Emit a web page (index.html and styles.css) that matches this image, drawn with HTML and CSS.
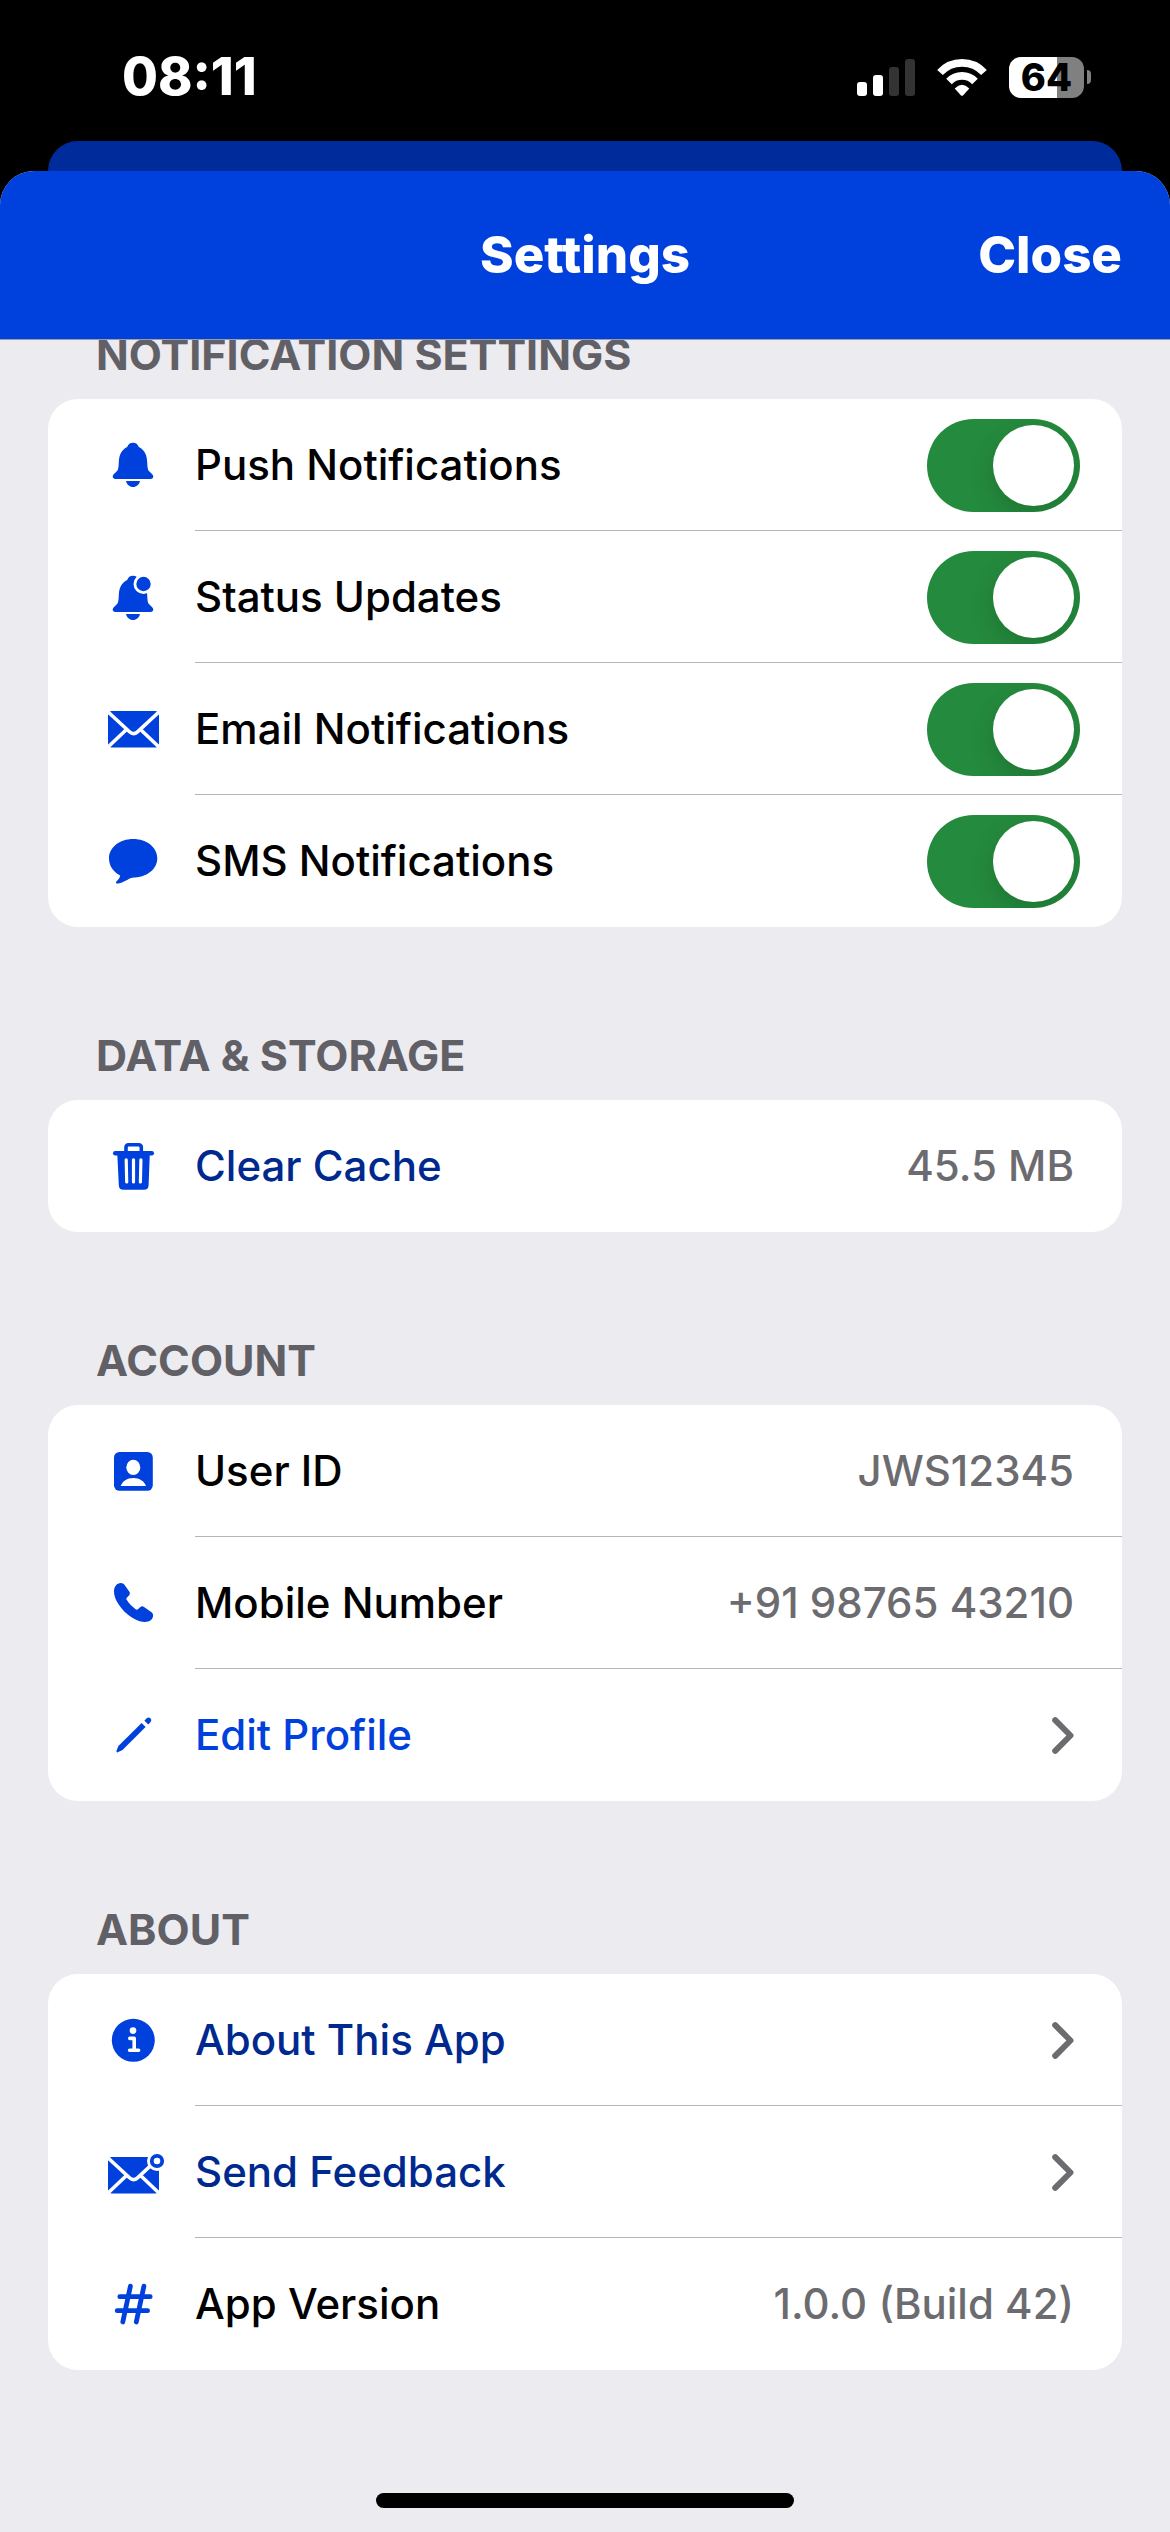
FILE: index.html
```html
<!DOCTYPE html>
<html lang="en">
<head>
<meta charset="utf-8">
<meta name="viewport" content="width=device-width, initial-scale=1">
<title>Settings</title>
<link rel="stylesheet" href="styles.css">
</head>
<body>
<div class="status-bar">
  <time class="clock">08:11</time>
  <div class="indicators">
    <svg class="signal" viewBox="0 0 58 37" aria-hidden="true">
      <rect x="0" y="23" width="10" height="14" rx="3"/>
      <rect x="16" y="16" width="10" height="21" rx="3"/>
      <rect class="off" x="32" y="8" width="10" height="29" rx="3"/>
      <rect class="off" x="48" y="0" width="10" height="37" rx="3"/>
    </svg>
    <svg class="wifi" viewBox="0 0 50 37" aria-hidden="true">
      <path class="arc" d="M3 13.5A30 30 0 0 1 47 13.5"/>
      <path class="arc" d="M12 22.5A18 18 0 0 1 38 22.5"/>
      <path d="M17.7 29.5Q25 22.2 32.3 29.5L26 36.4Q25 37.2 24 36.4Z"/>
    </svg>
    <div class="battery"><span class="battery-level">64</span><span class="battery-cap"></span></div>
  </div>
</div>

<div class="backdrop"></div>

<div class="sheet">
  <header class="nav">
    <h1 class="nav-title">Settings</h1>
    <button class="nav-close" type="button">Close</button>
  </header>

  <main class="content">
    <section class="group">
      <h2 class="group-title">NOTIFICATION SETTINGS</h2>
      <ul class="card">
        <li class="row">
          <svg class="icon" viewBox="0 0 64 64" aria-hidden="true">
            <path d="M32 9.7c3 0 4.8 1.6 5.8 4.2 5.4 2.6 8.2 8 8.4 15 .2 5.4.5 7.6 2 9.4 2 2 4.1 3.4 4.1 5.2 0 1.5-1.1 2.5-2.8 2.5h-35c-1.7 0-2.8-1-2.8-2.5 0-1.8 2.1-3.2 4.1-5.2 1.5-1.8 1.8-4 2-9.4.2-7 3-12.4 8.4-15 1-2.6 2.8-4.2 5.8-4.2z"/>
            <path d="M25 48h14c-.8 3.6-3.5 6-7 6s-6.2-2.4-7-6z"/>
          </svg>
          <div class="row-body">
            <label class="label" for="push">Push Notifications</label>
            <input class="switch" id="push" type="checkbox" checked>
          </div>
        </li>
        <li class="row">
          <svg class="icon" viewBox="0 -1 64 64" aria-hidden="true">
            <path d="M32 9.7c3 0 4.8 1.6 5.8 4.2 5.4 2.6 8.2 8 8.4 15 .2 5.4.5 7.6 2 9.4 2 2 4.1 3.4 4.1 5.2 0 1.5-1.1 2.5-2.8 2.5h-35c-1.7 0-2.8-1-2.8-2.5 0-1.8 2.1-3.2 4.1-5.2 1.5-1.8 1.8-4 2-9.4.2-7 3-12.4 8.4-15 1-2.6 2.8-4.2 5.8-4.2z"/>
            <path d="M25 48h14c-.8 3.6-3.5 6-7 6s-6.2-2.4-7-6z"/>
            <circle class="cut" cx="42.5" cy="18" r="10"/>
            <circle cx="42.5" cy="18" r="7.2"/>
          </svg>
          <div class="row-body">
            <label class="label" for="status">Status Updates</label>
            <input class="switch" id="status" type="checkbox" checked>
          </div>
        </li>
        <li class="row">
          <svg class="icon" viewBox="0 0 64 64" aria-hidden="true">
            <rect x="7" y="14" width="51" height="36.4" rx="4"/>
            <path class="line" d="M5.5 13.5L28.5 34.8Q32.5 38.4 36.5 34.8L59.5 13.5M6.5 50.5L25.5 32.5M58.5 50.5L39.5 32.5"/>
          </svg>
          <div class="row-body">
            <label class="label" for="email">Email Notifications</label>
            <input class="switch" id="email" type="checkbox" checked>
          </div>
        </li>
        <li class="row">
          <svg class="icon" viewBox="0 0 64 64" aria-hidden="true">
            <path d="M32.2 10C45.8 10 56.3 18.4 56.3 29.3S45.8 48.7 31 48.7c-4 1-7 4.3-14 5.9-1.8.3-2.6-1-1.6-2.2 1.6-1.8 3.2-3 3.8-6C12 43 8 36.6 8 29.3 8 18.4 18.6 10 32.2 10z"/>
          </svg>
          <div class="row-body">
            <label class="label" for="sms">SMS Notifications</label>
            <input class="switch" id="sms" type="checkbox" checked>
          </div>
        </li>
      </ul>
    </section>

    <section class="group">
      <h2 class="group-title">DATA &amp; STORAGE</h2>
      <ul class="card">
        <li class="row">
          <svg class="icon" viewBox="0 0 64 64" aria-hidden="true">
            <path class="pen trash-handle" d="M25 19V13.5Q25 10.8 27.7 10.8H37.6Q40.3 10.8 40.3 13.5V19"/>
            <rect x="12" y="17" width="41" height="4.4" rx="2.2"/>
            <path d="M16.3 20H48.8L47.6 51.2Q47.4 55.7 43 55.7H22.4Q18 55.7 17.8 51.2Z"/>
            <path class="line slot" d="M25.2 25.8L25.7 48M32.5 25.8V48M39.9 25.8L39.4 48"/>
          </svg>
          <button class="row-body" type="button">
            <span class="label label-navy">Clear Cache</span>
            <span class="value">45.5 MB</span>
          </button>
        </li>
      </ul>
    </section>

    <section class="group">
      <h2 class="group-title">ACCOUNT</h2>
      <ul class="card">
        <li class="row">
          <svg class="icon" viewBox="0 0 64 64" aria-hidden="true">
            <rect x="13" y="13" width="38.8" height="38.8" rx="5.5"/>
            <ellipse class="cut" cx="32.3" cy="28.4" rx="7" ry="7.7"/>
            <path class="cut" d="M19.7 47C21.5 42 26 39 32.3 39S43.2 42 45 47Z"/>
          </svg>
          <div class="row-body">
            <span class="label">User ID</span>
            <span class="value">JWS12345</span>
          </div>
        </li>
        <li class="row">
          <svg class="icon" viewBox="0 0 64 64" aria-hidden="true">
            <path d="M13 20.5C13 15.5 16 12 19.7 12C21.4 12 22.8 12.8 23.8 14.2L28.4 20.8C29.2 22 29 23.3 28 24.4L26 26.5C25.2 27.4 25.2 28.2 25.8 29.1C28 32.6 31 35.7 34.6 38.2C35.6 38.8 36.4 38.8 37.2 38L39.4 36.1C40.5 35.2 41.8 35.1 43 36L50.2 41C51.5 42 52.1 43 52.1 44.6C52.1 48.4 48.6 51 43.8 51C31 51 13 33.5 13 20.5Z"/>
          </svg>
          <div class="row-body">
            <span class="label">Mobile Number</span>
            <span class="value">+91 98765 43210</span>
          </div>
        </li>
        <li class="row">
          <svg class="icon" viewBox="0 0 64 64" aria-hidden="true">
            <path d="M15.6 47.6L17.4 43L40.6 19.9L44.6 23.9L21.5 47L16.8 49.2Q15 50 15.6 47.6Z"/>
            <path d="M43.4 17.7L45.6 15.3Q47.4 13.6 49.3 15.1Q51.2 17 49.6 18.9L47.3 21.5Z"/>
          </svg>
          <a class="row-body" href="#edit-profile">
            <span class="label label-blue">Edit Profile</span>
            <svg class="chevron" viewBox="0 0 22 37" aria-hidden="true"><path d="M3.2 3.2L18.5 18.5L3.2 33.8"/></svg>
          </a>
        </li>
      </ul>
    </section>

    <section class="group">
      <h2 class="group-title">ABOUT</h2>
      <ul class="card">
        <li class="row">
          <svg class="icon" viewBox="0 0 64 64" aria-hidden="true">
            <circle cx="32.3" cy="32.3" r="21.5"/>
            <circle class="cut" cx="32" cy="22.6" r="3.3"/>
            <path class="line info-stem" d="M28.8 30.4H33.2V42.2M28.6 42.2H37.6"/>
          </svg>
          <a class="row-body" href="#about">
            <span class="label label-navy">About This App</span>
            <svg class="chevron" viewBox="0 0 22 37" aria-hidden="true"><path d="M3.2 3.2L18.5 18.5L3.2 33.8"/></svg>
          </a>
        </li>
        <li class="row">
          <svg class="icon" viewBox="0 -3 64 64" aria-hidden="true">
            <rect x="7" y="14" width="51" height="36.4" rx="4"/>
            <path class="line" d="M5.5 13.5L28.5 34.8Q32.5 38.4 36.5 34.8L59.5 13.5M6.5 50.5L25.5 32.5M58.5 50.5L39.5 32.5"/>
            <circle class="cut" cx="56" cy="18" r="10"/>
            <circle class="pen ring" cx="56" cy="18" r="5.2"/>
          </svg>
          <a class="row-body" href="#feedback">
            <span class="label label-navy">Send Feedback</span>
            <svg class="chevron" viewBox="0 0 22 37" aria-hidden="true"><path d="M3.2 3.2L18.5 18.5L3.2 33.8"/></svg>
          </a>
        </li>
        <li class="row">
          <svg class="icon" viewBox="0 0 64 64" aria-hidden="true">
            <path class="pen hash" d="M18.8 24.7H49.2M16.2 38.7H46.6M29.4 14.2L21.8 50M42.9 14.2L35.3 50"/>
          </svg>
          <div class="row-body">
            <span class="label">App Version</span>
            <span class="value">1.0.0 (Build 42)</span>
          </div>
        </li>
      </ul>
    </section>
  </main>

  <div class="home-area"><div class="home-indicator"></div></div>
</div>
</body>
</html>
```
FILE: styles.css
```css
:root {
  --blue: #0040dd;
  --navy: #00298f;
  --green: #248a3d;
  --surface: #ebebf0;
  --muted: #6c6c70;
  --hairline: #b5b5b8;
}

* {
  box-sizing: border-box;
}

body {
  display: flex;
  flex-direction: column;
  min-height: 100vh;
  margin: 0;
  background: #000;
  color: #000;
  font-family: Inter, "Liberation Sans", sans-serif;
  font-size: 42px;
  font-weight: 550;
  line-height: 48px;
}

/* Status bar */

.status-bar {
  display: flex;
  align-items: center;
  justify-content: space-between;
  padding: 46px 79px 33px 122px;
  color: #fff;
}

.clock {
  font-size: 52px;
  font-weight: 800;
  line-height: 62px;
}

.indicators {
  display: flex;
  align-items: center;
  gap: 22px;
}

.signal {
  width: 58px;
  height: 37px;
  fill: #fff;
}

.signal .off {
  fill: #333;
}

.wifi {
  width: 50px;
  height: 37px;
  fill: #fff;
}

.wifi .arc {
  fill: none;
  stroke: #fff;
  stroke-width: 7.7;
}

.battery {
  display: flex;
  align-items: center;
  gap: 3px;
}

.battery-level {
  width: 75px;
  border-radius: 12px;
  background: linear-gradient(to right, #fff 64%, #808080 64%);
  color: #000;
  font-size: 38px;
  font-weight: 800;
  line-height: 41px;
  text-align: center;
}

.battery-cap {
  width: 4px;
  height: 14px;
  border-radius: 0 4px 4px 0;
  background: #808080;
}

/* Sheet */

.backdrop {
  height: 30px;
  margin: 0 48px;
  border-radius: 30px 30px 0 0;
  background: #002b9b;
}

.sheet {
  display: flex;
  flex: 1;
  flex-direction: column;
  overflow: hidden;
  border-radius: 34px 34px 0 0;
  background: var(--surface);
}

.nav {
  position: relative;
  z-index: 1;
  display: grid;
  grid-template-columns: 1fr auto 1fr;
  align-items: center;
  padding: 53px 48px;
  border-bottom: 1px solid #9a9ca8;
  background: var(--blue);
  color: #fff;
}

.nav-title {
  grid-column: 2;
  margin: 0;
  font-size: 51px;
  font-weight: 800;
  line-height: 62px;
}

.nav-close {
  justify-self: end;
  padding: 0;
  border: 0;
  background: none;
  color: inherit;
  font: inherit;
  font-size: 51px;
  font-weight: 800;
  line-height: 62px;
}

/* The list is scrolled slightly under the navigation bar. */
.content {
  display: flex;
  flex-direction: column;
  gap: 104px;
  margin-top: -10px;
  padding: 0 48px 104px;
}

.group-title {
  margin: 0 0 21px;
  padding: 0 48px;
  color: #616066;
  font-size: 43px;
  font-weight: 750;
  line-height: 48px;
}

.card {
  margin: 0;
  padding: 0;
  overflow: hidden;
  border-radius: 30px;
  background: #fff;
  list-style: none;
}

.row {
  display: flex;
  align-items: center;
  gap: 30px;
  padding-left: 53px;
}

.row-body {
  display: flex;
  flex: 1;
  align-items: center;
  justify-content: space-between;
  min-height: 132px;
  padding: 0 48px 0 0;
  border: 0;
  background: none;
  box-shadow: inset 0 -1px var(--hairline);
  color: inherit;
  font: inherit;
  text-align: left;
  text-decoration: none;
}

.row:last-child .row-body {
  box-shadow: none;
}

.row-body:has(.switch) {
  padding-right: 42px;
}

.label-navy {
  color: var(--navy);
}

.label-blue {
  color: var(--blue);
}

.value {
  color: var(--muted);
}

/* Icons */

.icon {
  flex: none;
  width: 64px;
  height: 64px;
  fill: var(--blue);
}

.icon .cut {
  fill: #fff;
}

.icon .line {
  fill: none;
  stroke: #fff;
  stroke-width: 3.6;
}

.icon .slot {
  stroke-width: 3.2;
  stroke-linecap: round;
}

.icon .info-stem {
  stroke-linecap: round;
  stroke-linejoin: round;
}

.icon .pen {
  fill: none;
  stroke: var(--blue);
  stroke-linecap: round;
}

.icon .trash-handle {
  stroke-width: 3.6;
}

.icon .ring {
  stroke-width: 3.8;
}

.icon .hash {
  stroke-width: 4.8;
}

.chevron {
  width: 22px;
  height: 37px;
  fill: none;
  stroke: var(--muted);
  stroke-width: 6;
  stroke-linecap: round;
  stroke-linejoin: round;
}

/* Switch */

.switch {
  flex: none;
  width: 153px;
  height: 93px;
  margin: 0;
  padding: 6px;
  overflow: hidden;
  appearance: none;
  border-radius: 47px;
  background: #d1d1d6;
}

.switch::before {
  display: block;
  width: 81px;
  height: 81px;
  border-radius: 50%;
  background: #fff;
  box-shadow: 0 9px 24px rgba(0, 0, 0, 0.15);
  content: "";
}

.switch:checked {
  background: var(--green);
}

.switch:checked::before {
  margin-left: auto;
}

/* Home indicator */

.home-area {
  display: flex;
  justify-content: center;
  margin-top: auto;
  padding-bottom: 24px;
}

.home-indicator {
  width: 418px;
  height: 15px;
  border-radius: 8px;
  background: #000;
}
```
